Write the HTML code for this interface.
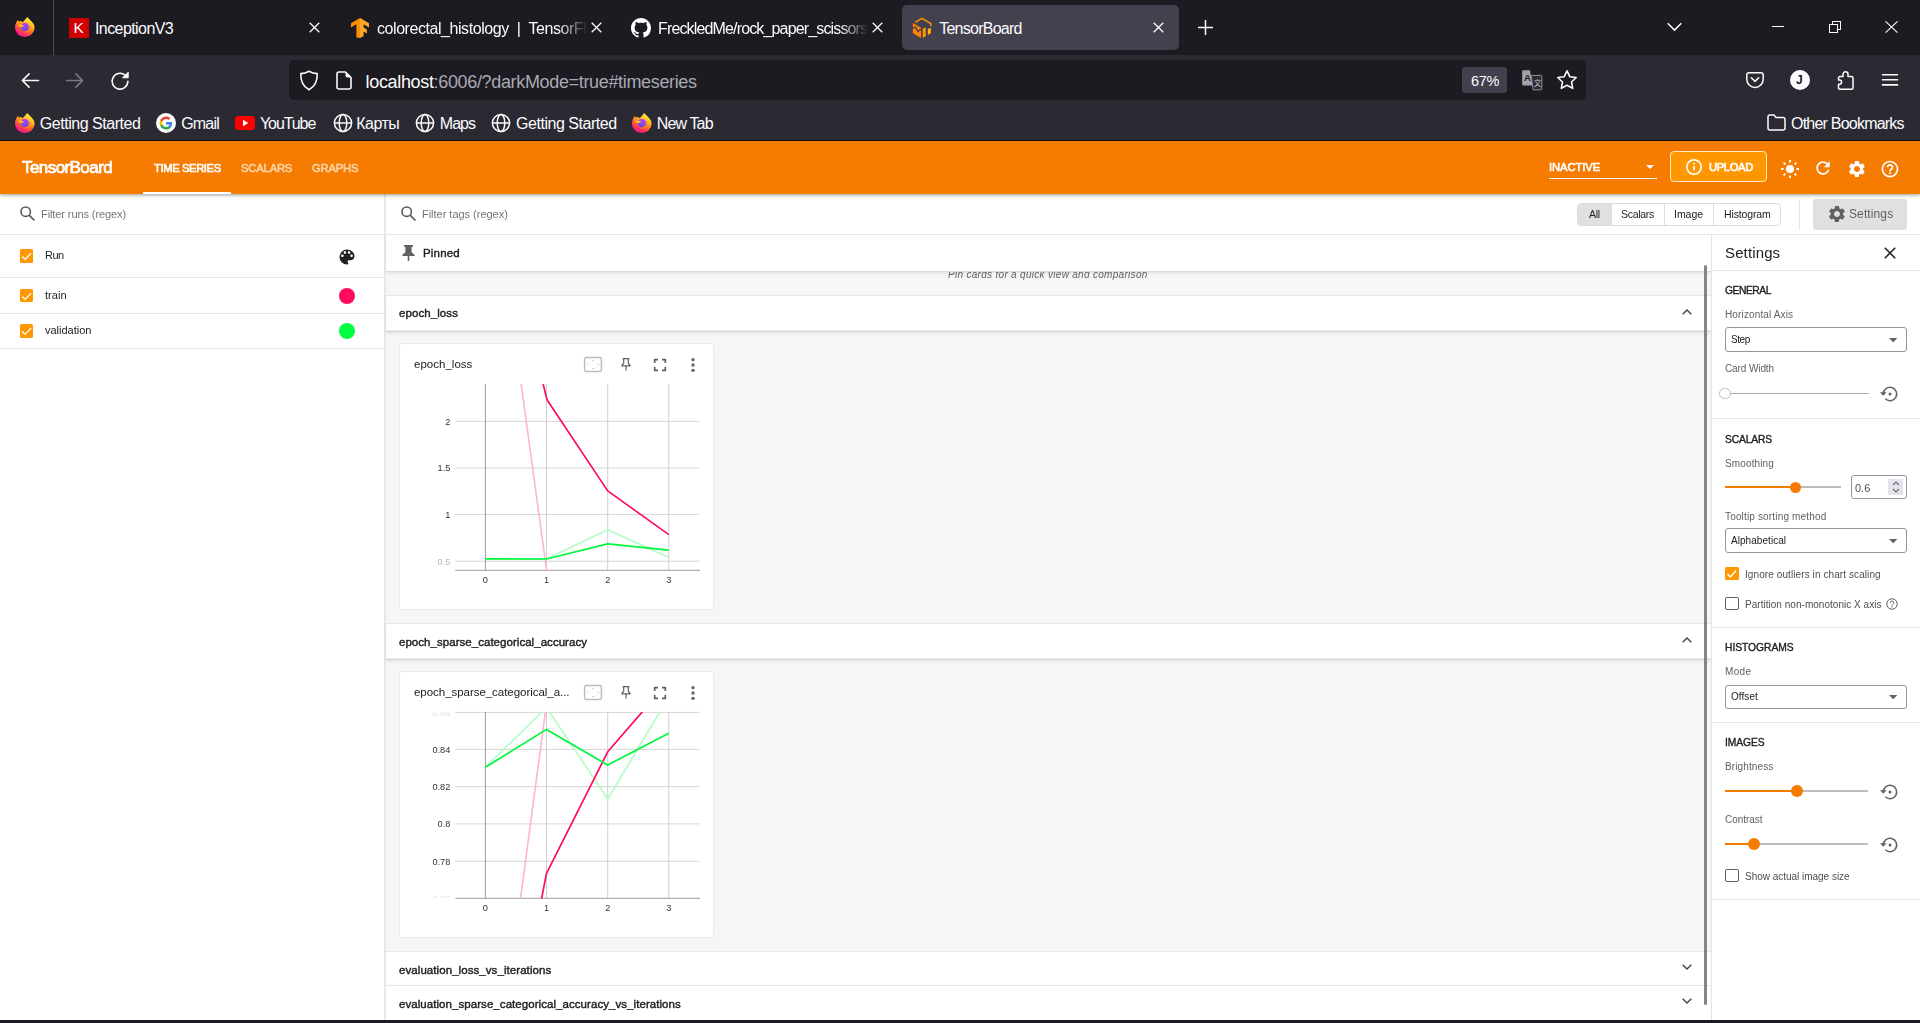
<!DOCTYPE html>
<html lang="en">
<head>
<meta charset="utf-8">
<title>TensorBoard</title>
<style>
*{box-sizing:border-box;margin:0;padding:0}
html,body{width:1920px;height:1023px;overflow:hidden;background:#fff}
body{font-family:"Liberation Sans",sans-serif;position:relative;color:#212121}
.abs{position:absolute}
.t{position:absolute;white-space:nowrap;line-height:20px}
svg{position:absolute;overflow:visible}

/* ---------- Browser chrome ---------- */
#tabbar{left:0;top:0;width:1920px;height:55px;background:#1c1b22}
#navbar{left:0;top:55px;width:1920px;height:85px;background:#2b2a33}
#chromeline{left:0;top:140px;width:1920px;height:1px;background:#0c0c0d}
#urlbar{left:289px;top:60px;width:1297px;height:40px;background:#1c1b22;border-radius:5px}
#acttab{left:902px;top:5px;width:277px;height:45px;background:#42414d;border-radius:5px}
.ff{color:#fbfbfe;font-size:16px;letter-spacing:-.45px}
.bm{color:#fbfbfe;font-size:16px;letter-spacing:-.45px}

/* ---------- TensorBoard ---------- */
#tbhead{left:0;top:141px;width:1920px;height:53px;background:#f57c00;box-shadow:0 1.500px 3px rgba(0,0,0,.33)}
#side{left:0;top:194px;width:386px;height:826px;background:#fff;border-right:2px solid #e8e8e9}
#main{left:386px;top:194px;width:1325px;height:826px;background:#f5f6f7;overflow:hidden}
#setp{left:1711px;top:234px;width:209px;height:786px;background:#fff;border-left:1px solid #e4e4e6}
#botbar{left:0;top:1020px;width:1920px;height:3px;background:#1c1b22}
.hl{position:absolute;height:1px;background:#e7e7e8}
.tb{font-size:11.7px;color:#212121}
.t{will-change:transform}
.ff,.bm,#url,#zoomb,#acc,#k1{will-change:auto}
.lbl{font-size:10px;color:#616161}
.sec{font-size:10.3px;color:#212121;-webkit-text-stroke:.35px #212121}
.md{-webkit-text-stroke:.4px currentColor}
.sel{position:absolute;left:1725px;width:182px;height:27px;border:1px solid #8e98a3;border-radius:3px;background:#fff}
</style>
</head>
<body>

<!-- ============ BROWSER CHROME ============ -->
<div class="abs" id="tabbar"></div>
<div class="abs" id="navbar"></div>
<div class="abs" id="chromeline"></div>
<div class="abs" id="urlbar"></div>
<div class="abs" id="acttab"></div>
<div class="abs" style="left:53px;top:0;width:1px;height:55px;background:#4a4a55"></div>


<!-- firefox logo (tab bar) -->
<svg style="left:15.300px;top:16.800px" width="19.600" height="19.800" viewBox="0 0 20 20">
  <defs>
    <linearGradient id="fxo" x1=".78" y1=".05" x2=".3" y2="1"><stop offset="0" stop-color="#fff44f"/><stop offset=".3" stop-color="#ffbd1f"/><stop offset=".58" stop-color="#ff6a2a"/><stop offset=".82" stop-color="#ff2b6b"/><stop offset="1" stop-color="#f0128a"/></linearGradient>
    <radialGradient id="fxi" cx=".55" cy=".15" r=".95"><stop offset="0" stop-color="#b833ff"/><stop offset=".5" stop-color="#8b4cf7"/><stop offset="1" stop-color="#4b50d0"/></radialGradient>
  </defs>
  <path d="M12.600 0C13.600 1.800 15.600 3 17.200 4.800 19 6.800 20 8.600 20 10.800A10 9.600 0 0 1 0 10.600C0 7.800 1.200 5 3 3c.3.600.6 1.200 1.200 1.600.7-.5 1.400-.7 2.300-.6.400.6.900 1 1.500 1.300C9 3.800 10.800 2.400 12.600 0z" fill="url(#fxo)"/><circle cx="10" cy="10" r="4.100" fill="url(#fxi)"/><path d="M2.900 8.200C4.500 7.400 6.600 7.600 7.600 8c.8.300 1.600.5 2.300.8-1 .4-1.900 1.100-3 1.200-1.700.1-3.100-.6-4-1.800z" fill="#ffbd1a"/><path d="M13.300 7.300c1.300 1.600 1.500 3.900.3 5.700-1.200 1.900-3.500 2.700-5.600 2.100 2.700 1.500 6.200.6 7.600-2.100 1-1.900.4-4.300-2.300-5.700z" fill="#ff8a1f" opacity=".85"/>
</svg>

<!-- tab 1 -->
<div class="abs" style="left:69px;top:18px;width:20px;height:20px;background:#d00000"></div>
<div class="t" id="k1" style="left:73.600px;top:18px;font-size:15.400px;color:#fff;">K</div>
<div class="t ff" id="tab1" style="left:95.0px;top:19px;letter-spacing:-0.58px">InceptionV3</div>
<svg style="left:309px;top:22px" width="11" height="11" viewBox="0 0 11 11"><path d="M.7.7l9.600 9.600M10.300.7L.7 10.300" stroke="#fbfbfe" stroke-width="1.300" fill="none"/></svg>

<!-- tab 2 : tensorflow -->
<svg style="left:350px;top:18px" width="20" height="20" viewBox="0 0 20 20">
  <path d="M10 0L1 5.200v4.200l5.400-3.100v13.200L10 20z" fill="#ff8f00"/>
  <path d="M10 0l9 5.200v4.200l-5.400-3.100v3.300l3.300 1.900v4l-3.300-1.900v4.300L10 20z" fill="#ffa726"/>
</svg>
<div class="t ff" id="tab2" style="left:377px;top:19px;width:211px;overflow:hidden;-webkit-mask-image:linear-gradient(90deg,#000 calc(100% - 30px),transparent);mask-image:linear-gradient(90deg,#000 calc(100% - 30px),transparent);letter-spacing:-.44px">colorectal_histology&nbsp;&nbsp;|&nbsp;&nbsp;TensorFlow Datasets</div>
<svg style="left:591px;top:22px" width="11" height="11" viewBox="0 0 11 11"><path d="M.7.7l9.600 9.600M10.300.7L.7 10.300" stroke="#fbfbfe" stroke-width="1.300" fill="none"/></svg>

<!-- tab 3 : github -->
<svg style="left:631px;top:18px" width="20" height="20" viewBox="0 0 16 16"><path fill="#fff" d="M8 0C3.580 0 0 3.580 0 8c0 3.540 2.290 6.530 5.470 7.590.4.070.55-.17.55-.38 0-.19-.010-.82-.010-1.490-2.010.37-2.530-.49-2.690-.94-.09-.23-.48-.94-.82-1.130-.28-.15-.68-.52-.010-.53.63-.010 1.080.58 1.230.82.720 1.210 1.870.87 2.330.66.070-.52.280-.87.510-1.070-1.780-.2-3.640-.89-3.640-3.950 0-.87.310-1.590.82-2.150-.08-.2-.36-1.020.08-2.120 0 0 .67-.21 2.200.82.640-.18 1.320-.27 2-.27s1.360.09 2 .27c1.530-1.040 2.200-.82 2.200-.82.440 1.100.16 1.920.08 2.120.51.560.82 1.270.82 2.150 0 3.070-1.870 3.750-3.650 3.950.29.250.54.730.54 1.480 0 1.070-.010 1.930-.010 2.200 0 .21.150.46.550.38A8.013 8.013 0 0 0 16 8c0-4.420-3.580-8-8-8z"/></svg>
<div class="t ff" id="tab3" style="left:658px;top:19px;width:211px;overflow:hidden;-webkit-mask-image:linear-gradient(90deg,#000 calc(100% - 30px),transparent);mask-image:linear-gradient(90deg,#000 calc(100% - 30px),transparent);letter-spacing:-.85px">FreckledMe/rock_paper_scissors: Rock</div>
<svg style="left:872px;top:22px" width="11" height="11" viewBox="0 0 11 11"><path d="M.7.7l9.600 9.600M10.300.7L.7 10.300" stroke="#fbfbfe" stroke-width="1.300" fill="none"/></svg>

<!-- tab 4 : tensorboard (active) -->
<svg style="left:912px;top:18px" width="20" height="20" viewBox="0 0 20 20">
  <path d="M3.200 4.300L9.900.4l9 5.200v2.600" fill="none" stroke="#ff9800" stroke-width="1.400" stroke-linejoin="round"/>
  <path d="M.8 4.900l8.300 4.900v10.100L.8 15.250z" fill="#ff8000"/>
  <path d="M.6 10.400l2.900-1.300 2.400 4.500 3.300-2.500" fill="none" stroke="#42414d" stroke-width="1.300"/>
  <path d="M10.800 10.600l3-1.100v8.600l-3 1.800z" fill="#ff9800"/>
  <path d="M15.800 10.900l3.100-1.200v5.550l-3.100 1.850z" fill="#ffb000"/>
</svg>
<div class="t ff" id="tab4" style="left:939.2px;top:19px;letter-spacing:-0.75px">TensorBoard</div>
<svg style="left:1153px;top:22px" width="11" height="11" viewBox="0 0 11 11"><path d="M.7.7l9.600 9.600M10.300.7L.7 10.300" stroke="#fbfbfe" stroke-width="1.300" fill="none"/></svg>

<!-- new tab + -->
<svg style="left:1198px;top:20px" width="15" height="15" viewBox="0 0 15 15"><path d="M7.500 0v15M0 7.500h15" stroke="#fbfbfe" stroke-width="1.500" fill="none"/></svg>
<!-- list all tabs chevron -->
<svg style="left:1666.500px;top:22px" width="15" height="10" viewBox="0 0 15 10"><path d="M.7 1.300l6.800 6.800 6.800-6.800" stroke="#fbfbfe" stroke-width="1.500" fill="none"/></svg>
<!-- window controls -->
<div class="abs" style="left:1772px;top:26px;width:12px;height:1px;background:#fbfbfe"></div>
<svg style="left:1829px;top:21px" width="13" height="13" viewBox="0 0 13 13" shape-rendering="crispEdges"><rect x=".5" y="3.500" width="8" height="8" fill="none" stroke="#fbfbfe" stroke-width="1"/><path d="M3.500 3.500V.5h8v8H8.500" fill="none" stroke="#fbfbfe" stroke-width="1"/></svg>
<svg style="left:1885px;top:21px" width="13" height="12" viewBox="0 0 13 12"><path d="M.5.300l12 11.400M12.500.3L.5 11.700" stroke="#fbfbfe" stroke-width="1.100" fill="none"/></svg>

<!-- back -->
<svg style="left:21px;top:72.300px" width="18" height="17" viewBox="0 0 18 17"><path d="M17.500 8.500H1.500M8.100 1.900L1.400 8.500l6.700 6.600" stroke="#fbfbfe" stroke-width="1.600" fill="none" stroke-linecap="round" stroke-linejoin="round"/></svg>
<!-- forward (disabled) -->
<svg style="left:66px;top:72.300px" width="18" height="17" viewBox="0 0 18 17"><path d="M.5 8.500h16M9.900 1.900l6.700 6.600-6.700 6.600" stroke="#7b7a83" stroke-width="1.600" fill="none" stroke-linecap="round" stroke-linejoin="round"/></svg>
<!-- reload -->
<svg style="left:110px;top:71px" width="20" height="20" viewBox="0 0 20 20"><path d="M17.900 10.300a7.900 7.900 0 1 1-2.800-6.100" stroke="#fbfbfe" stroke-width="1.600" fill="none" stroke-linecap="round"/><path d="M18.200 1.200v5.600h-5.600z" fill="#fbfbfe" stroke="#fbfbfe" stroke-width="1" stroke-linejoin="round"/></svg>
<!-- shield -->
<svg style="left:299px;top:70px" width="20" height="21" viewBox="0 0 20 21"><path d="M10 1.200c2.600 1.600 5.300 2.300 8.200 2.400.3 7-2.500 12.900-8.200 16.200C4.300 16.500 1.500 10.600 1.800 3.600 4.700 3.500 7.400 2.800 10 1.200z" stroke="#fbfbfe" stroke-width="1.600" fill="none" stroke-linejoin="round"/></svg>
<!-- page -->
<svg style="left:336px;top:71px" width="16" height="19" viewBox="0 0 16 19"><path d="M3 1h6.500L15 6.500V16a2 2 0 0 1-2 2H3a2 2 0 0 1-2-2V3a2 2 0 0 1 2-2z" stroke="#fbfbfe" stroke-width="1.600" fill="none" stroke-linejoin="round"/><path d="M9.500 1v3.500a2 2 0 0 0 2 2H15z" fill="#fbfbfe"/></svg>
<div class="t" id="url" style="left:365.6px;top:72px;font-size:18px;letter-spacing:-0.34px;color:#fbfbfe">localhost<span style="color:#a9a9b3">:6006/?darkMode=true#timeseries</span></div>
<!-- zoom badge -->
<div class="abs" style="left:1462px;top:67px;width:45px;height:26px;background:#42414d;border-radius:3px"></div>
<div class="t" id="zoomb" style="left:1471px;top:71px;font-size:14.500px;letter-spacing:-.3px;color:#fbfbfe">67%</div>
<!-- translate icon -->
<svg style="left:1522px;top:70px" width="20" height="20" viewBox="0 0 20 20"><path d="M1.200.3h6.800l2.400 15.300H1.200a1 1 0 0 1-1-1V1.300a1 1 0 0 1 1-1z" fill="#a2a2a8"/><path d="M9.100 5.400h9.700a1 1 0 0 1 1 1v12.400a1 1 0 0 1-1 1h-7.600z" fill="#2b2a33" stroke="#a2a2a8" stroke-width=".9"/><text x="2" y="10.800" font-family="Liberation Sans,sans-serif" font-size="9.500" font-weight="bold" fill="#1c1b22">A</text><text x="11.700" y="16.200" font-family="Liberation Sans,Noto Sans CJK SC,sans-serif" font-size="7.500" fill="#c2c2c8">文</text></svg>
<!-- star -->
<svg style="left:1556px;top:69px" width="22" height="22" viewBox="0 0 22 22"><path d="M11 1.800l2.800 5.900 6.400.8-4.700 4.500 1.200 6.400L11 16.300l-5.700 3.100 1.200-6.400L1.800 8.500l6.400-.8z" stroke="#fbfbfe" stroke-width="1.600" fill="none" stroke-linejoin="round"/></svg>
<!-- pocket -->
<svg style="left:1746px;top:72px" width="18" height="16" viewBox="0 0 18 16"><path d="M2.800.8h12.400a2 2 0 0 1 2 2v4.400a8.200 8.200 0 0 1-16.400 0V2.800a2 2 0 0 1 2-2z" stroke="#fbfbfe" stroke-width="1.500" fill="none"/><path d="M5.300 5.800L9 9.400l3.700-3.600" stroke="#fbfbfe" stroke-width="1.500" fill="none" stroke-linecap="round" stroke-linejoin="round"/></svg>
<!-- account -->
<div class="abs" style="left:1790px;top:70px;width:20px;height:20px;border-radius:50%;background:#fbfbfe"></div>
<div class="t" id="acc" style="left:1796px;top:70px;font-size:12px;font-weight:bold;color:#1c1b22">J</div>
<!-- extensions puzzle -->
<svg style="left:1837px;top:70px" width="17" height="20" viewBox="0 0 17 20"><path d="M6 6.500V4.200a2.500 2.500 0 0 1 5 0V6.500h3.500A1.500 1.500 0 0 1 16 8v9.800a1.500 1.500 0 0 1-1.500 1.500H3a1.500 1.500 0 0 1-1.500-1.500V14.200h1a2.100 2.100 0 0 0 0-4.200h-1V8A1.500 1.500 0 0 1 3 6.500z" stroke="#fbfbfe" stroke-width="1.500" fill="none" stroke-linejoin="round"/></svg>
<!-- hamburger -->
<svg style="left:1882px;top:73px" width="16" height="14" viewBox="0 0 16 14"><path d="M.5 1.700h15M.5 6.800h15M.5 11.900h15" stroke="#fbfbfe" stroke-width="1.600" stroke-linecap="round"/></svg>

<svg style="left:15.3px;top:113.300px" width="19.600" height="19.800" viewBox="0 0 20 20"><path d="M12.600 0C13.600 1.800 15.600 3 17.200 4.800 19 6.800 20 8.600 20 10.800A10 9.600 0 0 1 0 10.600C0 7.800 1.200 5 3 3c.3.600.6 1.200 1.200 1.600.7-.5 1.400-.7 2.300-.6.400.6.900 1 1.500 1.300C9 3.800 10.800 2.400 12.600 0z" fill="url(#fxo)"/><circle cx="10" cy="10" r="4.100" fill="url(#fxi)"/><path d="M2.900 8.200C4.500 7.400 6.600 7.600 7.600 8c.8.300 1.600.5 2.300.8-1 .4-1.900 1.100-3 1.200-1.700.1-3.100-.6-4-1.800z" fill="#ffbd1a"/><path d="M13.300 7.300c1.300 1.600 1.500 3.900.3 5.700-1.200 1.900-3.500 2.700-5.600 2.100 2.700 1.500 6.200.6 7.600-2.100 1-1.900.4-4.300-2.300-5.700z" fill="#ff8a1f" opacity=".85"/></svg>
<div class="t bm" id="bm1" style="left:39.8px;top:114px;letter-spacing:-0.47px">Getting Started</div>
<!-- google G -->
<svg style="left:156px;top:113px" width="20" height="20" viewBox="0 0 20 20"><circle cx="10" cy="10" r="10" fill="#fff"/><path d="M16.200 10.200c0-.5 0-.9-.1-1.300H10v2.500h3.500c-.2.800-.6 1.500-1.300 1.900v1.600h2.100c1.200-1.100 1.900-2.800 1.900-4.700z" fill="#4285f4"/><path d="M10 16.500c1.800 0 3.200-.6 4.300-1.600l-2.100-1.600c-.6.400-1.300.6-2.200.6-1.700 0-3.100-1.100-3.600-2.700H4.200v1.700c1.100 2.100 3.300 3.600 5.800 3.600z" fill="#34a853"/><path d="M6.400 11.200c-.1-.4-.2-.8-.2-1.200s.1-.8.200-1.200V7.100H4.200C3.800 8 3.500 9 3.500 10s.2 2 .7 2.900z" fill="#fbbc05"/><path d="M10 6.100c1 0 1.800.3 2.500 1l1.900-1.900C13.200 4.100 11.800 3.500 10 3.500c-2.500 0-4.700 1.500-5.800 3.600l2.200 1.700c.5-1.600 1.900-2.700 3.600-2.700z" fill="#ea4335"/></svg>
<div class="t bm" id="bm2" style="left:181.2px;top:114px;letter-spacing:-0.82px">Gmail</div>
<!-- youtube -->
<svg style="left:235px;top:116px" width="20" height="14" viewBox="0 0 20 14"><rect width="20" height="14" rx="3.200" fill="#f00"/><path d="M8 3.800v6.400L13.300 7z" fill="#fff"/></svg>
<div class="t bm" id="bm3" style="left:260.0px;top:114px;letter-spacing:-1.10px">YouTube</div>
<svg style="left:333px;top:113px" width="20" height="20" viewBox="0 0 20 20"><circle cx="10" cy="10" r="8.600" stroke="#fbfbfe" stroke-width="1.500" fill="none"/><ellipse cx="10" cy="10" rx="3.800" ry="8.600" stroke="#fbfbfe" stroke-width="1.500" fill="none"/><path d="M1.400 10h17.200" stroke="#fbfbfe" stroke-width="1.500"/></svg>
<div class="t bm" id="bm4" style="left:356.2px;top:114px;letter-spacing:-0.50px">Карты</div>
<svg style="left:415px;top:113px" width="20" height="20" viewBox="0 0 20 20"><circle cx="10" cy="10" r="8.600" stroke="#fbfbfe" stroke-width="1.500" fill="none"/><ellipse cx="10" cy="10" rx="3.800" ry="8.600" stroke="#fbfbfe" stroke-width="1.500" fill="none"/><path d="M1.400 10h17.200" stroke="#fbfbfe" stroke-width="1.500"/></svg>
<div class="t bm" id="bm5" style="left:439.8px;top:114px;letter-spacing:-0.99px">Maps</div>
<svg style="left:491px;top:113px" width="20" height="20" viewBox="0 0 20 20"><circle cx="10" cy="10" r="8.600" stroke="#fbfbfe" stroke-width="1.500" fill="none"/><ellipse cx="10" cy="10" rx="3.800" ry="8.600" stroke="#fbfbfe" stroke-width="1.500" fill="none"/><path d="M1.400 10h17.200" stroke="#fbfbfe" stroke-width="1.500"/></svg>
<div class="t bm" id="bm6" style="left:516.0px;top:114px;letter-spacing:-0.46px">Getting Started</div>
<svg style="left:632.3px;top:113.300px" width="19.600" height="19.800" viewBox="0 0 20 20"><path d="M12.600 0C13.600 1.800 15.600 3 17.200 4.800 19 6.800 20 8.600 20 10.800A10 9.600 0 0 1 0 10.600C0 7.800 1.200 5 3 3c.3.600.6 1.200 1.200 1.600.7-.5 1.400-.7 2.300-.6.400.6.900 1 1.500 1.300C9 3.800 10.800 2.400 12.600 0z" fill="url(#fxo)"/><circle cx="10" cy="10" r="4.100" fill="url(#fxi)"/><path d="M2.900 8.200C4.500 7.400 6.600 7.600 7.600 8c.8.300 1.600.5 2.300.8-1 .4-1.900 1.100-3 1.200-1.700.1-3.100-.6-4-1.800z" fill="#ffbd1a"/><path d="M13.300 7.300c1.300 1.600 1.500 3.900.3 5.700-1.200 1.900-3.500 2.700-5.600 2.100 2.700 1.500 6.200.6 7.600-2.100 1-1.900.4-4.300-2.300-5.700z" fill="#ff8a1f" opacity=".85"/></svg>
<div class="t bm" id="bm7" style="left:656.8px;top:114px;letter-spacing:-0.87px">New Tab</div>
<!-- other bookmarks folder -->
<svg style="left:1767px;top:114px" width="19" height="17" viewBox="0 0 19 17"><path d="M1 3a2 2 0 0 1 2-2h4l2 2.500h7a2 2 0 0 1 2 2V14a2 2 0 0 1-2 2H3a2 2 0 0 1-2-2z" stroke="#fbfbfe" stroke-width="1.500" fill="none" stroke-linejoin="round"/></svg>
<div class="t bm" id="bm8" style="left:1791.0px;top:114px;letter-spacing:-0.78px">Other Bookmarks</div>


<!-- ============ TENSORBOARD ============ -->
<div class="abs" id="side"></div>
<div class="abs" id="main">
</div>

<div class="t" id="pinmsg" style="left:948.4px;top:265.3px;font-size:10px;font-style:italic;color:#616161;letter-spacing:0.3px">Pin cards for a quick view and comparison</div>
<div class="abs" style="left:386px;top:235px;width:1325px;height:36px;background:#fff;box-shadow:0 1px 0 #dadbde,0 2px 3px rgba(0,0,0,.10)"></div>
<svg style="left:402px;top:245px" width="13" height="16" viewBox="0 0 13 16"><path d="M2 0h9v1.800H9.600v5.400L12.600 9.700v1.400H7.300V16H5.700v-4.900H.4V9.700L3.400 7.200V1.800H2z" fill="#616161"/></svg>
<div class="t" id="pinned" style="left:423.2px;top:243px;font-size:11.500px;color:#212121;-webkit-text-stroke:.4px currentColor;letter-spacing:0.18px">Pinned</div>

<div class="abs" style="left:386px;top:295px;width:1325px;height:36px;background:#fff;border-top:1px solid #e7e7e8;border-bottom:1px solid #e7e7e8;box-shadow:0 1px 0 #dadbde,0 2px 3px rgba(0,0,0,.10);"></div>
<div class="t" id="g1" style="left:399.0px;top:303.4px;font-size:11.500px;color:#212121;-webkit-text-stroke:.4px currentColor;letter-spacing:0.08px">epoch_loss</div>
<svg style="left:1682px;top:309px" width="10" height="6" viewBox="0 0 10 6"><path d="M.7 5.300L5 1l4.300 4.300" stroke="#424242" stroke-width="1.400" fill="none"/></svg>

<div class="abs" style="left:399px;top:343px;width:315px;height:267px;background:#fff;border:1px solid #ebebed;border-radius:3px"></div>
<div class="t tb" id="ct1" style="left:413.8px;top:354px;font-size:11.500px;letter-spacing:0.02px">epoch_loss</div>
<!-- fit -->
<svg style="left:584px;top:357px" width="18" height="15" viewBox="0 0 18 15"><rect x=".6" y=".6" width="16.800" height="13.800" rx="1.500" fill="none" stroke="#bdbdbd" stroke-width="1.500"/><path d="M9 2.800l1.300 1.300H7.700zM9 12.200l1.300-1.300H7.700zM2.800 7.500l1.300-1.300v2.600zM15.200 7.500l-1.300-1.300v2.600z" fill="#c4c4c4"/></svg>
<!-- pin outline -->
<svg style="left:621px;top:358px" width="10" height="13" viewBox="0 0 10 13"><path d="M1.600.6h6.800M2.700.6v4.600L1 7.300v.6h8v-.6L7.300 5.200V.6M5 7.900v4.700" stroke="#616161" stroke-width="1.200" fill="none"/></svg>
<!-- fullscreen -->
<svg style="left:654px;top:359px" width="12" height="12" viewBox="0 0 12 12"><path d="M.7 4V.7H4M8 .7h3.300V4M11.300 8v3.300H8M4 11.300H.7V8" stroke="#616161" stroke-width="1.700" fill="none"/></svg>
<!-- more -->
<svg style="left:691px;top:358px" width="4" height="14" viewBox="0 0 4 14"><circle cx="2" cy="1.700" r="1.650" fill="#616161"/><circle cx="2" cy="7" r="1.650" fill="#616161"/><circle cx="2" cy="12.300" r="1.650" fill="#616161"/></svg>
<svg style="left:399px;top:343px" width="315" height="266" viewBox="399 343 315 266">
<defs><clipPath id="cp1"><rect x="455" y="384" width="245" height="186.500"/></clipPath></defs>
<path d="M455.300 421.4H699.400" stroke="#d6d6d6" stroke-width="1"/><path d="M455.300 468H699.400" stroke="#d6d6d6" stroke-width="1"/><path d="M455.300 514.4H699.400" stroke="#d6d6d6" stroke-width="1"/><path d="M455.300 561.2H699.400" stroke="#d6d6d6" stroke-width="1"/><path d="M546.5 384V570.3" stroke="#d0d0d0" stroke-width="1"/><path d="M607.7 384V570.3" stroke="#d0d0d0" stroke-width="1"/><path d="M668.8 384V570.3" stroke="#d0d0d0" stroke-width="1"/><path d="M485.400 384V570.3" stroke="#9c9c9c" stroke-width="1"/><path d="M455.300 570.3H700" stroke="#9c9c9c" stroke-width="1"/><text x="485.4" y="583.3" text-anchor="middle" font-size="9.200" fill="#333" font-family="Liberation Sans,sans-serif">0</text><text x="546.5" y="583.3" text-anchor="middle" font-size="9.200" fill="#333" font-family="Liberation Sans,sans-serif">1</text><text x="607.7" y="583.3" text-anchor="middle" font-size="9.200" fill="#333" font-family="Liberation Sans,sans-serif">2</text><text x="668.8" y="583.3" text-anchor="middle" font-size="9.200" fill="#333" font-family="Liberation Sans,sans-serif">3</text><text x="450.300" y="424.7" text-anchor="end" font-size="9.200" fill="#333" font-family="Liberation Sans,sans-serif">2</text><text x="450.300" y="471.3" text-anchor="end" font-size="9.200" fill="#333" font-family="Liberation Sans,sans-serif">1.5</text><text x="450.300" y="517.6999999999999" text-anchor="end" font-size="9.200" fill="#333" font-family="Liberation Sans,sans-serif">1</text><text x="450.300" y="564.5" text-anchor="end" font-size="9.200" fill="#b8b8b8" font-family="Liberation Sans,sans-serif">0.5</text>
<g clip-path="url(#cp1)" fill="none" stroke-linejoin="round">
<path d="M515 338.800L546.500 569.600L607.700 600" stroke="#ffb5ce" stroke-width="1.600"/>
<path d="M485.400 558.800L546.500 559L607.700 529.800L668.800 557.500" stroke="#b3fcc5" stroke-width="1.600"/>
<path d="M540 371L547 399.800L607.700 490.900L668.800 534.600" stroke="#ff0b5c" stroke-width="1.700"/>
<path d="M485.400 558.800L546.500 559L607.700 543.900L668.800 550.200" stroke="#00f53d" stroke-width="1.700"/>
</g>
</svg>

<div class="abs" style="left:386px;top:623px;width:1325px;height:35.500px;background:#fff;border-top:1px solid #e7e7e8;border-bottom:1px solid #e7e7e8;box-shadow:0 1px 0 #dadbde,0 2px 3px rgba(0,0,0,.10);"></div>
<div class="t" id="g2" style="left:399.4px;top:631.6px;font-size:11.500px;color:#212121;-webkit-text-stroke:.4px currentColor;letter-spacing:0.04px">epoch_sparse_categorical_accuracy</div>
<svg style="left:1682px;top:637px" width="10" height="6" viewBox="0 0 10 6"><path d="M.7 5.300L5 1l4.300 4.300" stroke="#424242" stroke-width="1.400" fill="none"/></svg>

<div class="abs" style="left:399px;top:671px;width:315px;height:267px;background:#fff;border:1px solid #ebebed;border-radius:3px"></div>
<div class="t tb" id="ct2" style="left:414.2px;top:682px;font-size:11.500px;letter-spacing:-0.04px">epoch_sparse_categorical_a...</div>
<!-- fit -->
<svg style="left:584px;top:685px" width="18" height="15" viewBox="0 0 18 15"><rect x=".6" y=".6" width="16.800" height="13.800" rx="1.500" fill="none" stroke="#bdbdbd" stroke-width="1.500"/><path d="M9 2.800l1.300 1.300H7.700zM9 12.200l1.300-1.300H7.700zM2.800 7.500l1.300-1.300v2.600zM15.200 7.500l-1.300-1.300v2.600z" fill="#c4c4c4"/></svg>
<!-- pin outline -->
<svg style="left:621px;top:686px" width="10" height="13" viewBox="0 0 10 13"><path d="M1.600.6h6.800M2.700.6v4.600L1 7.300v.6h8v-.6L7.300 5.200V.6M5 7.900v4.700" stroke="#616161" stroke-width="1.200" fill="none"/></svg>
<!-- fullscreen -->
<svg style="left:654px;top:687px" width="12" height="12" viewBox="0 0 12 12"><path d="M.7 4V.7H4M8 .7h3.300V4M11.300 8v3.300H8M4 11.300H.7V8" stroke="#616161" stroke-width="1.700" fill="none"/></svg>
<!-- more -->
<svg style="left:691px;top:686px" width="4" height="14" viewBox="0 0 4 14"><circle cx="2" cy="1.700" r="1.650" fill="#616161"/><circle cx="2" cy="7" r="1.650" fill="#616161"/><circle cx="2" cy="12.300" r="1.650" fill="#616161"/></svg>
<svg style="left:399px;top:671px" width="315" height="266" viewBox="399 671 315 266">
<defs><clipPath id="cp2"><rect x="455" y="712" width="245" height="186.500"/></clipPath></defs>
<path d="M455.300 712.4H699.400" stroke="#d6d6d6" stroke-width="1"/><path d="M455.300 749.4H699.400" stroke="#d6d6d6" stroke-width="1"/><path d="M455.300 786.6H699.400" stroke="#d6d6d6" stroke-width="1"/><path d="M455.300 823.9H699.400" stroke="#d6d6d6" stroke-width="1"/><path d="M455.300 861.3H699.400" stroke="#d6d6d6" stroke-width="1"/><path d="M546.5 712V898.3" stroke="#d0d0d0" stroke-width="1"/><path d="M607.7 712V898.3" stroke="#d0d0d0" stroke-width="1"/><path d="M668.8 712V898.3" stroke="#d0d0d0" stroke-width="1"/><path d="M485.400 712V898.3" stroke="#9c9c9c" stroke-width="1"/><path d="M455.300 898.3H700" stroke="#9c9c9c" stroke-width="1"/><text x="485.4" y="911.3" text-anchor="middle" font-size="9.200" fill="#333" font-family="Liberation Sans,sans-serif">0</text><text x="546.5" y="911.3" text-anchor="middle" font-size="9.200" fill="#333" font-family="Liberation Sans,sans-serif">1</text><text x="607.7" y="911.3" text-anchor="middle" font-size="9.200" fill="#333" font-family="Liberation Sans,sans-serif">2</text><text x="668.8" y="911.3" text-anchor="middle" font-size="9.200" fill="#333" font-family="Liberation Sans,sans-serif">3</text><text x="450.300" y="752.6999999999999" text-anchor="end" font-size="9.200" fill="#333" font-family="Liberation Sans,sans-serif">0.84</text><text x="450.300" y="789.9" text-anchor="end" font-size="9.200" fill="#333" font-family="Liberation Sans,sans-serif">0.82</text><text x="450.300" y="827.1999999999999" text-anchor="end" font-size="9.200" fill="#333" font-family="Liberation Sans,sans-serif">0.8</text><text x="450.300" y="864.5999999999999" text-anchor="end" font-size="9.200" fill="#333" font-family="Liberation Sans,sans-serif">0.78</text>
<g clip-path="url(#cp2)" fill="none" stroke-linejoin="round">
<path d="M515 940L546.500 703.700" stroke="#ffb5ce" stroke-width="1.600"/>
<path d="M485.400 767.200L546.500 707.600L607.700 799L668.800 697" stroke="#b3fcc5" stroke-width="1.600"/>
<path d="M530 958L546.500 873.400L607.700 751.800L668.800 681.300" stroke="#ff0b5c" stroke-width="1.700"/>
<path d="M485.400 767.200L546.500 729.400L607.700 765L668.800 733.300" stroke="#00f53d" stroke-width="1.700"/>
</g>
<defs><clipPath id="cp2b"><rect x="425" y="712.300" width="30" height="186"/></clipPath></defs><g clip-path="url(#cp2b)"><text x="450.300" y="715.600" text-anchor="end" font-size="9.200" fill="#dcdcdc" font-family="Liberation Sans,sans-serif">0.86</text>
<text x="450.300" y="901.600" text-anchor="end" font-size="9.200" fill="#e6e6e6" font-family="Liberation Sans,sans-serif">0.76</text></g>

</svg>

<div class="abs" style="left:386px;top:951px;width:1325px;height:35px;background:#fff;border-top:1px solid #e7e7e8;border-bottom:1px solid #e7e7e8;"></div>
<div class="t" id="g3" style="left:399.4px;top:960px;font-size:11.500px;color:#212121;-webkit-text-stroke:.4px currentColor;letter-spacing:0.07px">evaluation_loss_vs_iterations</div>
<svg style="left:1682px;top:964px" width="10" height="6" viewBox="0 0 10 6"><path d="M.7.7L5 5l4.300-4.300" stroke="#424242" stroke-width="1.400" fill="none"/></svg>

<div class="abs" style="left:386px;top:985px;width:1325px;height:36px;background:#fff;border-top:1px solid #e7e7e8;border-bottom:1px solid #e7e7e8;"></div>
<div class="t" id="g4" style="left:399.4px;top:994px;font-size:11.500px;color:#212121;-webkit-text-stroke:.4px currentColor;letter-spacing:0.06px">evaluation_sparse_categorical_accuracy_vs_iterations</div>
<svg style="left:1682px;top:998px" width="10" height="6" viewBox="0 0 10 6"><path d="M.7.7L5 5l4.300-4.300" stroke="#424242" stroke-width="1.400" fill="none"/></svg>

<!-- scrollbar -->
<div class="abs" style="left:1704px;top:265px;width:3px;height:740px;background:#858585;border-radius:1.500px"></div>

<div class="abs" id="setp"></div>

<!-- top filter row (over main) -->
<div class="abs" style="left:386px;top:194px;width:1534px;height:40px;background:#fff"></div>
<div class="hl" style="left:386px;top:234px;width:1534px"></div>
<svg style="left:401px;top:206px" width="15" height="15" viewBox="0 0 15 15"><circle cx="5.700" cy="5.700" r="4.700" stroke="#5a5a5a" stroke-width="1.600" fill="none"/><path d="M9.100 9.100l5.400 5.400" stroke="#5a5a5a" stroke-width="1.700"/></svg>
<div class="t" id="ftags" style="left:422.2px;top:204px;font-size:11px;color:#70757a;letter-spacing:-0.02px">Filter tags (regex)</div>
<!-- toggle group -->
<div class="abs" style="left:1577px;top:203px;width:204px;height:23px;border:1px solid #dadce0;border-radius:4px;background:#fff;overflow:hidden">
  <div class="abs" style="left:0;top:0;width:33px;height:22px;background:#e0e0e0"></div>
  <div class="abs" style="left:33px;top:0;width:1px;height:22px;background:#dadce0"></div>
  <div class="abs" style="left:86px;top:0;width:1px;height:22px;background:#dadce0"></div>
  <div class="abs" style="left:135px;top:0;width:1px;height:22px;background:#dadce0"></div>
</div>
<div class="t" id="tg1" style="left:1588.8px;top:204px;font-size:10.500px;color:#212121;letter-spacing:-0.30px">All</div>
<div class="t" id="tg2" style="left:1621.0px;top:204px;font-size:10.500px;color:#212121;letter-spacing:-0.30px">Scalars</div>
<div class="t" id="tg3" style="left:1673.8px;top:204px;font-size:10.500px;color:#212121;letter-spacing:-0.04px">Image</div>
<div class="t" id="tg4" style="left:1723.8px;top:204px;font-size:10.500px;color:#212121;letter-spacing:-0.14px">Histogram</div>
<div class="abs" style="left:1799px;top:199px;width:1px;height:31px;background:#e3e5e8"></div>
<div class="abs" style="left:1813px;top:199px;width:94px;height:31px;background:#e0e0e0;border-radius:3px"></div>
<svg style="left:1826.700px;top:204px" width="20" height="20" viewBox="0 0 24 24"><path fill="#616161" d="M19.140 12.940c.04-.3.060-.61.060-.94 0-.32-.02-.64-.07-.94l2.030-1.580a.49.49 0 0 0 .12-.61l-1.920-3.320a.488.488 0 0 0-.59-.22l-2.390.96c-.5-.38-1.030-.7-1.620-.94l-.36-2.540a.484.484 0 0 0-.48-.41h-3.840c-.24 0-.43.170-.47.410l-.36 2.540c-.59.240-1.130.57-1.620.94l-2.390-.96c-.22-.08-.47 0-.59.220L2.740 8.870c-.12.210-.8.470.12.610l2.030 1.580c-.5.300-.9.630-.9.940s.2.640.7.940l-2.030 1.580a.49.490 0 0 0-.12.610l1.920 3.320c.12.220.37.290.59.220l2.390-.96c.5.380 1.030.7 1.620.94l.36 2.540c.5.240.24.410.48.410h3.840c.24 0 .44-.17.470-.41l.36-2.540c.59-.24 1.130-.56 1.620-.94l2.390.96c.22.080.47 0 .59-.22l1.920-3.320c.12-.22.070-.47-.12-.61l-2.010-1.580zM12 15.600c-1.980 0-3.600-1.620-3.600-3.600s1.620-3.600 3.600-3.600 3.600 1.620 3.600 3.600-1.620 3.600-3.600 3.600z"/></svg>
<div class="t" id="setbtn" style="left:1848.8px;top:204px;font-size:12px;color:#616161;letter-spacing:0.11px">Settings</div>

<svg style="left:20px;top:206px" width="15" height="15" viewBox="0 0 15 15"><circle cx="5.700" cy="5.700" r="4.700" stroke="#5a5a5a" stroke-width="1.600" fill="none"/><path d="M9.100 9.100l5.400 5.400" stroke="#5a5a5a" stroke-width="1.700"/></svg>
<div class="t" id="fruns" style="left:41.2px;top:204px;font-size:11px;color:#70757a;letter-spacing:-0.09px">Filter runs (regex)</div>
<div class="hl" style="left:0;top:234px;width:384px"></div>
<div class="hl" style="left:0;top:277px;width:384px"></div>
<div class="hl" style="left:0;top:313px;width:384px"></div>
<div class="hl" style="left:0;top:348px;width:384px"></div>
<div class="abs" style="left:20px;top:249px;width:13px;height:14px;background:#ff9800;border-radius:1.500px"></div><svg style="left:20px;top:249px" width="13" height="14" viewBox="0 0 13 14"><path d="M2.200 7.500l3 2.900 5.900-6.300" stroke="#fff" stroke-width="1.350" fill="none"/></svg><div class="abs" style="left:20px;top:289px;width:13px;height:13px;background:#ff9800;border-radius:1.500px"></div><svg style="left:20px;top:289px" width="13" height="14" viewBox="0 0 13 14"><path d="M2.200 7.500l3 2.900 5.900-6.300" stroke="#fff" stroke-width="1.350" fill="none"/></svg><div class="abs" style="left:20px;top:324px;width:13px;height:14px;background:#ff9800;border-radius:1.500px"></div><svg style="left:20px;top:324px" width="13" height="14" viewBox="0 0 13 14"><path d="M2.200 7.500l3 2.900 5.900-6.300" stroke="#fff" stroke-width="1.350" fill="none"/></svg>
<div class="t tb" id="r0" style="left:44.6px;top:245px;font-size:11px;letter-spacing:-0.48px">Run</div>
<div class="t tb" id="r1" style="left:45.1px;top:285px;font-size:11px;letter-spacing:0.05px">train</div>
<div class="t tb" id="r2" style="left:45.1px;top:320px;font-size:11px;letter-spacing:0.00px">validation</div>
<!-- palette -->
<svg style="left:337px;top:246.500px" width="20" height="20" viewBox="0 0 24 24"><path fill="#212121" d="M12 3a9 9 0 0 0 0 18c.83 0 1.500-.67 1.500-1.500 0-.39-.15-.74-.39-1.010-.23-.26-.38-.61-.38-.99 0-.83.670-1.500 1.500-1.500H16c2.760 0 5-2.240 5-5 0-4.420-4.030-8-9-8zm-5.500 9c-.83 0-1.500-.67-1.500-1.500S5.670 9 6.500 9 8 9.670 8 10.500 7.330 12 6.500 12zm3-4C8.670 8 8 7.330 8 6.500S8.670 5 9.500 5s1.500.67 1.500 1.500S10.330 8 9.500 8zm5 0c-.83 0-1.500-.67-1.500-1.500S13.670 5 14.500 5s1.500.67 1.500 1.500S15.330 8 14.500 8zm3 4c-.83 0-1.500-.67-1.500-1.500S16.670 9 17.500 9s1.500.67 1.500 1.500-.67 1.500-1.500 1.500z"/></svg>
<div class="abs" style="left:339px;top:288px;width:16px;height:16px;border-radius:50%;background:#ff0b5c"></div>
<div class="abs" style="left:339px;top:323px;width:16px;height:16px;border-radius:50%;background:#00ff40"></div>


<div class="t" id="stitle" style="left:1724.8px;top:243px;font-size:15px;color:#212121;letter-spacing:0.13px">Settings</div>
<svg style="left:1884px;top:247px" width="12" height="12" viewBox="0 0 12 12"><path d="M.8.800l10.400 10.400M11.200.8L.8 11.200" stroke="#212121" stroke-width="1.600" fill="none"/></svg>
<div class="hl" style="left:1712px;top:270px;width:208px"></div>
<div class="t sec" id="s1" style="left:1724.8px;top:281px;letter-spacing:-0.47px">GENERAL</div>
<div class="t lbl" id="l1" style="left:1724.8px;top:304.7px;letter-spacing:0.14px">Horizontal Axis</div>
<div class="sel" style="top:327px;height:25px"></div>
<div class="t" id="sel1" style="left:1731.4px;top:330.0px;font-size:10px;color:#212121;letter-spacing:-0.42px">Step</div>
<svg style="left:1889px;top:338.0px" width="8.400" height="4.200" viewBox="0 0 9 4.500"><path d="M0 0h9L4.500 4.500z" fill="#616161"/></svg>
<div class="t lbl" id="l2" style="left:1724.8px;top:359.4px;letter-spacing:-0.10px">Card Width</div>
<div class="abs" style="left:1725px;top:393px;width:144px;height:1px;background:#ababab"></div>
<div class="abs" style="left:1719.200px;top:387.700px;width:11.600px;height:11.600px;border-radius:50%;background:#fff;border:1.300px solid #bdbdbd"></div>
<svg style="left:1879.300px;top:385px" width="19" height="18" viewBox="0 0 19 18"><path d="M4.300 9a6.700 6.700 0 1 1 2 4.800" stroke="#616161" stroke-width="1.500" fill="none"/><path d="M1 7.200h6.600L4.300 10.800z" fill="#616161"/><circle cx="11" cy="9" r="1.500" fill="#616161"/></svg>
<div class="hl" style="left:1712px;top:418px;width:208px"></div>
<div class="t sec" id="s2" style="left:1724.8px;top:430px;letter-spacing:-0.17px">SCALARS</div>
<div class="t lbl" id="l3" style="left:1724.8px;top:453.6px;letter-spacing:0.13px">Smoothing</div>
<div class="abs" style="left:1725px;top:486px;width:116px;height:2px;background:#bdbdbd"></div>
<div class="abs" style="left:1725px;top:486px;width:70.3px;height:2px;background:#f57c00"></div>
<div class="abs" style="left:1790px;top:481.700px;width:11.200px;height:11.200px;border-radius:50%;background:#f57c00"></div>

<div class="abs" style="left:1851px;top:475px;width:56px;height:24px;border:1px solid #8e98a3;border-radius:3px;background:#fff"></div>
<div class="t" id="numv" style="left:1855px;top:478px;font-size:11px;color:#4f4f4f;letter-spacing:0px">0.6</div>
<div class="abs" style="left:1888px;top:479px;width:15px;height:16px;background:#e4e4ec;border-radius:0"></div>
<svg style="left:1892px;top:481px" width="8" height="12" viewBox="0 0 8 12"><path d="M1 4l3-3 3 3M1 8l3 3 3-3" stroke="#6d6d75" stroke-width="1.100" fill="none"/></svg>
<div class="t lbl" id="l4" style="left:1724.8px;top:506.8px;letter-spacing:0.16px">Tooltip sorting method</div>
<div class="sel" style="top:528px;height:24.500px"></div>
<div class="t" id="sel2" style="left:1731.4px;top:531.0px;font-size:10px;color:#212121;letter-spacing:0.05px">Alphabetical</div>
<svg style="left:1889px;top:539.0px" width="8.400" height="4.200" viewBox="0 0 9 4.500"><path d="M0 0h9L4.500 4.500z" fill="#616161"/></svg>
<div class="abs" style="left:1725px;top:567px;width:14px;height:13px;background:#ff9800;border-radius:1.500px"></div><svg style="left:1725px;top:567px" width="14" height="13" viewBox="0 0 14 13"><path d="M2.400 7l3.100 2.900 5.600-6.300" stroke="#fff" stroke-width="1.500" fill="none"/></svg>
<div class="t lbl" id="l5" style="left:1744.8px;top:564.6px;color:#4f4f4f;letter-spacing:0.09px">Ignore outliers in chart scaling</div>
<div class="abs" style="left:1725px;top:597px;width:14px;height:13px;background:#fff;border:1.400px solid #616161;border-radius:2px"></div>
<div class="t lbl" id="l6" style="left:1744.8px;top:594.6px;color:#4f4f4f;letter-spacing:0.03px">Partition non-monotonic X axis</div>

<svg style="left:1886px;top:598px" width="12" height="12" viewBox="0 0 12 12"><circle cx="6" cy="6" r="5.200" stroke="#616161" stroke-width="1" fill="none"/><path d="M4.300 4.800a1.700 1.700 0 1 1 2.500 1.500c-.5.300-.8.600-.8 1.200" stroke="#616161" stroke-width="1" fill="none"/><circle cx="6" cy="8.900" r=".65" fill="#616161"/></svg>
<div class="hl" style="left:1712px;top:627px;width:208px"></div>
<div class="t sec" id="s3" style="left:1724.8px;top:638.2px;letter-spacing:-0.04px">HISTOGRAMS</div>
<div class="t lbl" id="l7" style="left:1724.8px;top:662px;letter-spacing:0.36px">Mode</div>
<div class="sel" style="top:684.500px;height:24.200px"></div>
<div class="t" id="sel3" style="left:1731.4px;top:686.5px;font-size:10px;color:#212121;letter-spacing:0.06px">Offset</div>
<svg style="left:1889px;top:694.5px" width="8.400" height="4.200" viewBox="0 0 9 4.500"><path d="M0 0h9L4.500 4.500z" fill="#616161"/></svg>
<div class="hl" style="left:1712px;top:722px;width:208px"></div>
<div class="t sec" id="s4" style="left:1724.8px;top:733.2px;letter-spacing:-0.10px">IMAGES</div>
<div class="t lbl" id="l8" style="left:1724.8px;top:757px;letter-spacing:0.12px">Brightness</div>
<div class="abs" style="left:1725px;top:790px;width:143px;height:2px;background:#bdbdbd"></div>
<div class="abs" style="left:1725px;top:790px;width:71.6px;height:2px;background:#f57c00"></div>
<div class="abs" style="left:1790.9px;top:785px;width:12px;height:12px;border-radius:50%;background:#f57c00"></div>
<svg style="left:1879.300px;top:783px" width="19" height="18" viewBox="0 0 19 18"><path d="M4.300 9a6.700 6.700 0 1 1 2 4.800" stroke="#616161" stroke-width="1.500" fill="none"/><path d="M1 7.200h6.600L4.300 10.800z" fill="#616161"/><circle cx="11" cy="9" r="1.500" fill="#616161"/></svg>
<div class="t lbl" id="l9" style="left:1724.8px;top:809.8px;letter-spacing:-0.05px">Contrast</div>
<div class="abs" style="left:1725px;top:843px;width:143px;height:2px;background:#bdbdbd"></div>
<div class="abs" style="left:1725px;top:843px;width:28.7px;height:2px;background:#f57c00"></div>
<div class="abs" style="left:1747.9px;top:838px;width:12px;height:12px;border-radius:50%;background:#f57c00"></div>
<svg style="left:1879.300px;top:836px" width="19" height="18" viewBox="0 0 19 18"><path d="M4.300 9a6.700 6.700 0 1 1 2 4.800" stroke="#616161" stroke-width="1.500" fill="none"/><path d="M1 7.200h6.600L4.300 10.800z" fill="#616161"/><circle cx="11" cy="9" r="1.500" fill="#616161"/></svg>
<div class="abs" style="left:1725px;top:869px;width:14px;height:13px;background:#fff;border:1.400px solid #616161;border-radius:2px"></div>
<div class="t lbl" id="l10" style="left:1744.8px;top:866.6px;color:#4f4f4f;letter-spacing:-0.02px">Show actual image size</div>
<div class="hl" style="left:1712px;top:899px;width:208px"></div>

<div class="abs" id="tbhead"></div>

<div class="t" id="brand" style="left:22.2px;top:158px;font-size:17px;color:#fff;-webkit-text-stroke:.7px currentColor;letter-spacing:-0.57px">TensorBoard</div>
<div class="t" id="nav1" style="left:153.6px;top:158px;font-size:11.200px;color:#fff;-webkit-text-stroke:.6px currentColor;letter-spacing:-0.37px">TIME SERIES</div>
<div class="t" id="nav2" style="left:241.0px;top:158px;font-size:11.200px;color:#fbd3a6;-webkit-text-stroke:.6px currentColor;letter-spacing:-0.15px">SCALARS</div>
<div class="t" id="nav3" style="left:312.0px;top:158px;font-size:11.200px;color:#fbd3a6;-webkit-text-stroke:.6px currentColor;letter-spacing:-0.18px">GRAPHS</div>
<div class="abs" style="left:143px;top:192px;width:88px;height:2px;background:#fff"></div>

<div class="t" id="inact" style="left:1549.0px;top:157px;font-size:11.200px;color:#fff;-webkit-text-stroke:.6px currentColor;letter-spacing:-0.05px">INACTIVE</div>
<div class="abs" style="left:1549px;top:178px;width:108px;height:1px;background:#fff"></div>
<svg style="left:1646px;top:165px" width="8" height="4" viewBox="0 0 8 4"><path d="M0 0h8L4 4z" fill="#fff"/></svg>

<div class="abs" style="left:1670px;top:151px;width:97px;height:31px;background:#ff9800;border:1px solid #ffe9c9;border-radius:4px"></div>
<svg style="left:1686px;top:159px" width="16" height="16" viewBox="0 0 16 16"><circle cx="8" cy="8" r="7.200" stroke="#fff" stroke-width="1.650" fill="none"/><path d="M8 7v4.600" stroke="#fff" stroke-width="1.700"/><circle cx="8" cy="4.700" r="1" fill="#fff"/></svg>
<div class="t" id="upl" style="left:1709.0px;top:157px;font-size:11.200px;color:#fff;-webkit-text-stroke:.6px currentColor;letter-spacing:-0.36px">UPLOAD</div>

<!-- sun -->
<svg style="left:1781px;top:160px" width="18" height="18" viewBox="0 0 18 18"><circle cx="9" cy="9" r="4.100" fill="#fff"/><path d="M15.40 9.00L18.00 9.00M13.53 13.53L15.36 15.36M9.00 15.40L9.00 18.00M4.47 13.53L2.64 15.36M2.60 9.00L0.00 9.00M4.47 4.47L2.64 2.64M9.00 2.60L9.00 0.00M13.53 4.47L15.36 2.64" stroke="#fff" stroke-width="1.800" fill="none"/></svg>
<!-- refresh -->
<svg style="left:1813px;top:158px" width="20" height="20" viewBox="0 0 24 24"><path d="M17.650 6.350C16.200 4.900 14.210 4 12 4c-4.420 0-7.990 3.580-7.990 8s3.570 8 7.990 8c3.730 0 6.840-2.550 7.730-6h-2.080c-.820 2.330-3.040 4-5.650 4-3.310 0-6-2.690-6-6s2.690-6 6-6c1.660 0 3.140.690 4.220 1.780L13 11h7V4l-2.350 2.350z" fill="#fff"/></svg>
<!-- gear -->
<svg style="left:1847px;top:159px" width="20" height="20" viewBox="0 0 24 24"><path fill="#fff" d="M19.140 12.940c.04-.3.060-.61.060-.94 0-.32-.02-.64-.07-.94l2.030-1.580a.49.49 0 0 0 .12-.61l-1.920-3.320a.488.488 0 0 0-.59-.22l-2.390.96c-.5-.38-1.030-.7-1.620-.94l-.36-2.540a.484.484 0 0 0-.48-.41h-3.840c-.24 0-.43.170-.47.410l-.36 2.540c-.59.240-1.130.57-1.620.94l-2.390-.96c-.22-.08-.47 0-.59.220L2.740 8.870c-.12.210-.8.470.12.610l2.030 1.580c-.5.300-.9.630-.9.940s.2.640.7.940l-2.030 1.580a.49.490 0 0 0-.12.610l1.920 3.320c.12.220.37.290.59.220l2.390-.96c.5.380 1.030.7 1.620.94l.36 2.540c.5.240.24.410.48.410h3.840c.24 0 .44-.17.470-.41l.36-2.540c.59-.24 1.130-.56 1.620-.94l2.390.96c.22.080.47 0 .59-.22l1.920-3.320c.12-.22.070-.47-.12-.61l-2.010-1.580zM12 15.600c-1.980 0-3.600-1.620-3.600-3.600s1.620-3.600 3.600-3.600 3.600 1.620 3.600 3.600-1.620 3.600-3.600 3.600z"/></svg>
<!-- help -->
<svg style="left:1880.200px;top:159px" width="20" height="20" viewBox="0 0 24 24"><path fill="#fff" d="M11 18h2v-2h-2v2zm1-16C6.480 2 2 6.480 2 12s4.480 10 10 10 10-4.480 10-10S17.520 2 12 2zm0 18c-4.410 0-8-3.590-8-8s3.590-8 8-8 8 3.590 8 8-3.590 8-8 8zm0-14c-2.210 0-4 1.790-4 4h2c0-1.100.9-2 2-2s2 .9 2 2c0 2-3 1.750-3 5h2c0-2.250 3-2.500 3-5 0-2.210-1.790-4-4-4z"/></svg>

<div class="abs" id="botbar"></div>

</body>
</html>
